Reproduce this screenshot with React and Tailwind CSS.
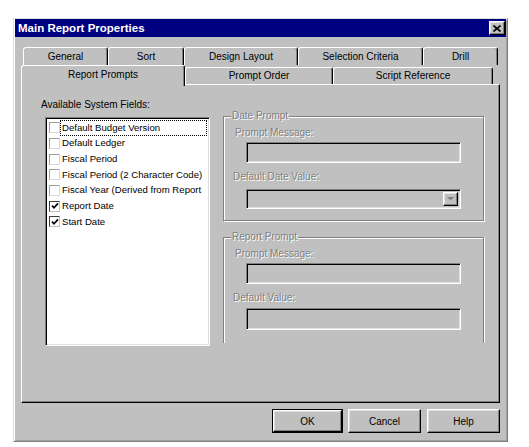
import React from "react";

const raised =
  "border border-t-white border-l-white border-r-black border-b-black shadow-[inset_-1px_-1px_0_#808080,inset_1px_1px_0_#dfdfdf]";
const sunken =
  "border border-t-[#808080] border-l-[#808080] border-r-white border-b-white shadow-[inset_1px_1px_0_#000,inset_-1px_-1px_0_#dfdfdf]";
const disabledText = "text-[#808080] [text-shadow:1px_1px_0_#ffffff]";

function Tab({ label, w, h, selected }) {
  return (
    <div
      className={`${w} ${h} ${
        selected ? "relative z-10 -mb-[2px]" : ""
      } flex items-center justify-center bg-[#c0c0c0] border-t border-l border-r border-t-white border-l-white border-r-black rounded-tl-[3px] rounded-tr-[3px] shadow-[inset_-1px_0_0_#808080] text-[10px] leading-[12px] text-black whitespace-nowrap`}
    >
      <span className={selected ? "-mt-[3px]" : ""}>{label}</span>
    </div>
  );
}

function Check({ checked }) {
  return (
    <div
      className={`w-[11px] h-[11px] shrink-0 bg-white flex items-center justify-center border ${
        checked
          ? "border-t-[#404040] border-l-[#404040] border-r-[#c0c0c0] border-b-[#c0c0c0]"
          : "border-t-[#a0a0a0] border-l-[#a0a0a0] border-r-[#d8d8d8] border-b-[#d8d8d8]"
      }`}
    >
      {checked && (
        <svg width="8" height="8" viewBox="0 0 8 8">
          <path d="M1 3.6 L3 5.8 L7 1.4" stroke="#000" strokeWidth="1.7" fill="none" />
        </svg>
      )}
    </div>
  );
}

function Item({ label, checked, focus }) {
  return (
    <div className="h-[15.67px] flex items-center pl-[1px] whitespace-nowrap overflow-hidden">
      <Check checked={checked} />
      <div
        className={`h-full flex-1 flex items-center pl-[1px] text-[9.6px] text-black ${
          focus ? "border border-dotted border-black" : "border border-transparent"
        }`}
      >
        {label}
      </div>
    </div>
  );
}

function Group({ label, className, children }) {
  return (
    <div className={`relative w-[261px] border-[#808080] ${className}`}>
      <div
        className={`absolute -top-[7px] left-[7px] bg-[#c0c0c0] px-[1px] text-[10px] leading-[12px] ${disabledText}`}
      >
        {label}
      </div>
      {children}
    </div>
  );
}

function Label({ children, className }) {
  return (
    <div className={`text-[10px] leading-[12px] h-[12px] ${disabledText} ${className}`}>
      {children}
    </div>
  );
}

export default function App() {
  const items = [
    ["Default Budget Version", false, true],
    ["Default Ledger", false, false],
    ["Fiscal Period", false, false],
    ["Fiscal Period (2 Character Code)", false, false],
    ["Fiscal Year (Derived from Report", false, false],
    ["Report Date", true, false],
    ["Start Date", true, false],
  ];
  return (
    <div className="w-[529px] h-[447px] bg-white pt-[18px] pl-[13px] font-['Liberation_Sans',Arial,sans-serif]">
      <div className="w-[495px] h-[424px] bg-[#c0c0c0] border border-t-[#dfdfdf] border-l-[#dfdfdf] border-r-[#808080] border-b-[#808080] shadow-[inset_1px_1px_0_#fff,inset_-1px_-1px_0_#a0a0a0] px-[1px] flex flex-col">
        {/* title bar */}
        <div className="h-[18px] bg-[#000080] flex items-center justify-between pl-[3px] pr-[1px]">
          <span className="text-white font-bold text-[11.5px] leading-[14px]">Main Report Properties</span>
          <div className={`w-[16px] h-[14px] bg-[#c0c0c0] ${raised} flex items-center justify-center`}>
            <svg width="8" height="7" viewBox="0 0 8 7">
              <path d="M0.5 0.5 L7.5 6.5 M7.5 0.5 L0.5 6.5" stroke="#000" strokeWidth="1.6" />
            </svg>
          </div>
        </div>

        {/* tabs + panel */}
        <div className="mt-[10px] ml-[6px] w-[479px] flex flex-col">
          <div className="h-[18px] pl-[2px] flex">
            <Tab label="General" w="w-[85px]" h="h-[18px]" />
            <Tab label="Sort" w="w-[76px]" h="h-[18px]" />
            <Tab label="Design Layout" w="w-[114px]" h="h-[18px]" />
            <Tab label="Selection Criteria" w="w-[125px]" h="h-[18px]" />
            <Tab label="Drill" w="w-[75px]" h="h-[18px]" />
          </div>
          <div className="h-[19px] flex items-end">
            <Tab label="Report Prompts" w="w-[164px]" h="h-[21px]" selected />
            <Tab label="Prompt Order" w="w-[148px]" h="h-[17px]" />
            <Tab label="Script Reference" w="w-[160px]" h="h-[17px]" />
          </div>
          <div className="h-[319px] border border-t-white border-l-white border-r-black border-b-black shadow-[inset_-1px_-1px_0_#808080] flex">
            {/* left column */}
            <div className="pl-[19px] pt-[13px] flex flex-col">
              <div className="text-[10px] leading-[14px] h-[14px] text-black">Available System Fields:</div>
              <div className={`mt-[5px] ml-[4px] w-[165px] h-[229px] bg-white ${sunken} p-[2px] pt-[2px] flex flex-col`}>
                {items.map(([l, c, f]) => (
                  <Item key={l} label={l} checked={c} focus={f} />
                ))}
              </div>
            </div>
            {/* right column */}
            <div className="ml-[13px] pt-[31px] flex flex-col">
              <Group
                label="Date Prompt"
                className="h-[105px] border shadow-[inset_1px_1px_0_#fff,1px_1px_0_#fff]"
              >
                <Label className="mt-[10px] ml-[11px]">Prompt Message:</Label>
                <div className={`mt-[3px] ml-[22px] w-[215px] h-[21px] ${sunken}`} />
                <Label className="mt-[8px] ml-[9px]">Default Date Value:</Label>
                <div className={`mt-[6px] ml-[22px] w-[215px] h-[20px] ${sunken} flex justify-end items-stretch p-[2px]`}>
                  <div className={`w-[15px] bg-[#c0c0c0] ${raised} flex items-center justify-center`}>
                    <svg width="7" height="4" viewBox="0 0 7 4">
                      <path d="M0 0 H7 L3.5 3.5 Z" fill="#808080" />
                    </svg>
                  </div>
                </div>
              </Group>
              <Group
                label="Report Prompt"
                className="mt-[16px] h-[106px] border border-b-0 shadow-[inset_1px_1px_0_#fff,1px_0_0_#fff]"
              >
                <Label className="mt-[10px] ml-[11px]">Prompt Message:</Label>
                <div className={`mt-[3px] ml-[22px] w-[215px] h-[21px] ${sunken}`} />
                <Label className="mt-[8px] ml-[9px]">Default Value:</Label>
                <div className={`mt-[4px] ml-[22px] w-[215px] h-[22px] ${sunken}`} />
              </Group>
            </div>
          </div>

          {/* buttons */}
          <div className="mt-[6px] h-[24px] flex justify-end">
            <div className="w-[71px] h-[24px] border border-black mr-[5px]">
              <div className={`w-full h-full ${raised} flex items-center justify-center text-[10px] text-black`}>OK</div>
            </div>
            <div className={`w-[73px] h-[24px] mr-[6px] ${raised} flex items-center justify-center text-[10px] text-black`}>
              Cancel
            </div>
            <div className={`w-[73px] h-[24px] ${raised} flex items-center justify-center text-[10px] text-black`}>
              Help
            </div>
          </div>
        </div>
      </div>
    </div>
  );
}
